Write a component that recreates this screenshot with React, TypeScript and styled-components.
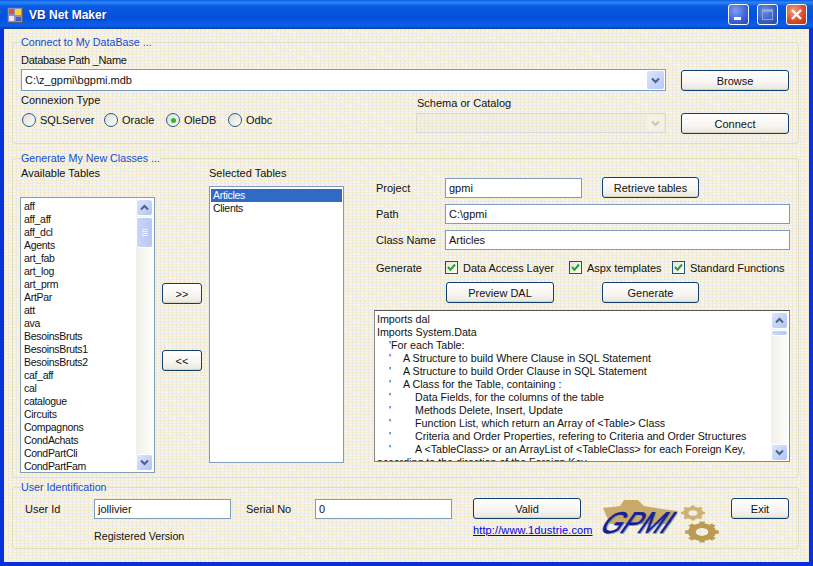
import React from 'react';
import styled, { createGlobalStyle } from 'styled-components';

const GlobalStyle = createGlobalStyle`
  html, body {
    margin: 0;
    padding: 0;
    background: #fff;
  }
  * {
    box-sizing: border-box;
  }
`;

const Window = styled.div`
  width: 813px;
  height: 566px;
  display: flex;
  flex-direction: column;
  overflow: hidden;
  background: #0831d9;
  font-family: "Liberation Sans", Arial, sans-serif;
  font-size: 11px;
  color: #111;
`;

const TitleBar = styled.div`
  height: 29px;
  flex: none;
  display: flex;
  align-items: center;
  padding: 0 6px 0 7px;
  gap: 6px;
  background: linear-gradient(180deg, #0a5ae8 0%, #2a86f5 8%, #0a5ae0 22%, #0350dc 60%, #0a5fe8 88%, #0340b8 100%);
`;

const TitleText = styled.div`
  flex: 1;
  font-size: 12px;
  font-weight: bold;
  color: #fff;
  text-shadow: 1px 1px 0 #0f2f90;
`;

const CaptionButton = styled.div<{ $kind: 'min' | 'max' | 'close' }>`
  width: 21px;
  height: 21px;
  margin-left: 2px;
  border: 1px solid #fff;
  border-radius: 3px;
  display: flex;
  align-items: center;
  justify-content: center;
  background: ${p => p.$kind === 'close'
    ? 'radial-gradient(circle at 35% 30%, #f0a080, #d8482a 60%, #b8300f)'
    : p.$kind === 'max'
      ? 'radial-gradient(circle at 35% 30%, #6c8ee0, #3a5cc0 60%, #2a48a8)'
      : 'radial-gradient(circle at 35% 30%, #7f9ff0, #3a62d8 60%, #2446b8)'};
`;

const Client = styled.div`
  flex: 1;
  margin: 0 4px 4px;
  display: flex;
  flex-direction: column;
  padding: 6px 10px 0 8px;
  background-color: #f5f1e2;
  background-image:
    repeating-linear-gradient(0deg, rgba(250, 232, 150, 0.42) 0 1px, transparent 1px 3px),
    repeating-linear-gradient(90deg, rgba(205, 212, 255, 0.34) 0 1px, transparent 1px 4px),
    repeating-linear-gradient(45deg, rgba(255, 255, 255, 0.45) 0 1px, transparent 1px 3px);
`;

const Group = styled.fieldset<{ $height: number; $top: number }>`
  height: ${p => p.$height}px;
  min-width: 0;
  margin: ${p => p.$top}px 0 0;
  flex: none;
  padding: 0 6px 0 8px;
  border: 1px solid #e2dec2;
  border-radius: 3px;
`;

const Legend = styled.legend`
  padding: 0;
  color: #0f4cd0;
  font-size: 10.7px;
  height: 14px;
  line-height: 14px;
`;

const Label = styled.div<{ $top?: number; $left?: number }>`
  line-height: 14px;
  white-space: nowrap;
  margin-top: ${p => p.$top ?? 0}px;
  margin-left: ${p => p.$left ?? 0}px;
`;

/* connection group */
const ConnectGrid = styled.div`
  display: grid;
  grid-template-columns: 395px 250px 108px;
  margin-top: 4px;
`;

const WideLabel = styled(Label)`
  grid-column: 1 / 4;
  letter-spacing: -0.3px;
`;

const ComboCell = styled.div`
  grid-column: 1 / 3;
  margin-top: 2px;
`;

const Combo = styled.div<{ $disabled?: boolean; $top?: number }>`
  height: ${p => (p.$disabled ? 20 : 22)}px;
  margin-top: ${p => p.$top ?? 0}px;
  display: flex;
  align-items: center;
  justify-content: space-between;
  padding: 0 1px 0 3px;
  border: 1px solid ${p => (p.$disabled ? '#dcdacb' : '#7f9db9')};
  background: ${p => (p.$disabled ? 'rgba(236, 233, 216, 0.35)' : '#fff')};
`;

const ComboArrow = styled.div<{ $disabled?: boolean }>`
  width: 17px;
  height: ${p => (p.$disabled ? 16 : 18)}px;
  display: flex;
  align-items: center;
  justify-content: center;
  border-radius: 2px;
  background: ${p => (p.$disabled ? 'rgba(245, 243, 232, 0.7)' : 'linear-gradient(135deg, #dbe5fd, #b5c8f7)')};
  color: ${p => (p.$disabled ? '#c9c7b8' : '#4d6185')};
`;

const Button = styled.button<{ $width: number; $left?: number }>`
  width: ${p => p.$width}px;
  height: 21px;
  margin-left: ${p => p.$left ?? 0}px;
  flex: none;
  padding: 0;
  border: 1px solid #0f3f6e;
  border-radius: 3px;
  font-family: inherit;
  font-size: 11px;
  color: #111;
  background: linear-gradient(180deg, #fff 0%, #f8f5f2 60%, #e8e6da 100%);
  box-shadow: inset 0 -1px 0 #d8d4c4;
`;

const ButtonCell = styled.div<{ $top?: number }>`
  margin-left: 15px;
  margin-top: ${p => p.$top ?? 0}px;
  justify-self: start;
`;

const ConnexionCell = styled.div`
  margin-top: 2px;
`;

const SchemaCell = styled.div`
  margin-top: 5px;
`;

const RadioRow = styled.div`
  display: flex;
  margin: 6px 0 0 1px;
`;

const RadioItem = styled.label<{ $width: number }>`
  width: ${p => p.$width}px;
  display: flex;
  align-items: center;
  gap: 4px;
`;

const RadioDot = styled.span<{ $checked?: boolean }>`
  width: 14px;
  height: 14px;
  flex: none;
  display: flex;
  align-items: center;
  justify-content: center;
  border: 1px solid #2a5a80;
  border-radius: 50%;
  background: linear-gradient(135deg, #dcdcd4, #fff);

  &::after {
    content: '';
    width: 5px;
    height: 5px;
    border-radius: 50%;
    background: ${p => (p.$checked ? '#32b332' : 'transparent')};
  }
`;

/* generate group */
const GenerateRow = styled.div`
  display: flex;
  margin-left: -1px;
`;

const ListColumn = styled.div`
  width: 135px;
  flex: none;
`;

const ListBox = styled.div<{ $top: number; $height: number }>`
  height: ${p => p.$height}px;
  margin-top: ${p => p.$top}px;
  display: flex;
  padding: 1px;
  border: 1px solid #7f9db9;
  background: #fff;
  overflow: hidden;
`;

const ListItems = styled.div`
  flex: 1;
  min-width: 0;
  overflow: hidden;
  padding-top: 1px;
`;

const ListItem = styled.div<{ $selected?: boolean }>`
  height: 13px;
  line-height: 13px;
  padding-left: 2px;
  font-size: 10.5px;
  letter-spacing: -0.3px;
  white-space: nowrap;
  background: ${p => (p.$selected ? '#316ac5' : 'transparent')};
  color: ${p => (p.$selected ? '#fff' : '#111')};
`;

const TransferColumn = styled.div`
  width: 40px;
  flex: none;
  margin: 118px 7px 0;
  display: flex;
  flex-direction: column;
  gap: 46px;
`;

const FormColumn = styled.div`
  width: 416px;
  flex: none;
  margin-left: 30px;
  display: flex;
  flex-direction: column;
  padding-top: 12px;
`;

const FormRow = styled.div<{ $top?: number }>`
  display: flex;
  align-items: center;
  margin-top: ${p => p.$top ?? 0}px;
`;

const FormLabel = styled.div`
  width: 71px;
  flex: none;
  padding-left: 2px;
`;

const TextBox = styled.div<{ $width?: number }>`
  height: 20px;
  width: ${p => (p.$width ? `${p.$width}px` : 'auto')};
  flex: ${p => (p.$width ? 'none' : 1)};
  display: flex;
  align-items: center;
  padding: 0 3px;
  border: 1px solid #7f9db9;
  background: #fff;
`;

const CheckItem = styled.label<{ $width: number }>`
  width: ${p => p.$width}px;
  flex: none;
  display: flex;
  align-items: center;
  gap: 5px;
  white-space: nowrap;
  letter-spacing: -0.05px;
`;

const CheckBox = styled.span`
  width: 13px;
  height: 13px;
  flex: none;
  display: flex;
  align-items: center;
  justify-content: center;
  border: 1px solid #1c5180;
  background: linear-gradient(135deg, #e4e4dc, #fff);
`;

const CodeBox = styled.div`
  height: 152px;
  margin-top: 7px;
  display: flex;
  padding: 1px 1px 0 2px;
  border: 1px solid #8a8a80;
  border-top-color: #55554c;
  background: #fff;
  overflow: hidden;
`;

const CodeText = styled.div`
  flex: 1;
  min-width: 0;
  overflow: hidden;
  padding-top: 1px;
  font-size: 10.7px;
`;

const CodeLine = styled.div<{ $indent?: number }>`
  height: 13px;
  line-height: 13px;
  white-space: nowrap;
  display: flex;
  padding-left: ${p => p.$indent ?? 0}px;
`;

const Tick = styled.span<{ $width: number }>`
  width: ${p => p.$width}px;
  flex: none;
`;

/* scrollbars */
const ScrollTrack = styled.div`
  width: 17px;
  flex: none;
  display: flex;
  flex-direction: column;
  background: linear-gradient(90deg, #f1f0ea, #fdfdfb);
`;

const ScrollArrow = styled.div`
  height: 17px;
  flex: none;
  display: flex;
  align-items: center;
  justify-content: center;
  border: 1px solid #fff;
  border-radius: 3px;
  background: linear-gradient(135deg, #dbe5fd, #b0c4f5);
  color: #4d6185;
`;

const ScrollThumb = styled.div<{ $height: number }>`
  height: ${p => p.$height}px;
  flex: none;
  margin-top: 1px;
  display: flex;
  flex-direction: column;
  align-items: center;
  justify-content: center;
  gap: 1px;
  border: 1px solid #fff;
  border-radius: 3px;
  background: linear-gradient(90deg, #c9d6fa, #b6c8f6);
`;

const Grip = styled.span`
  width: 6px;
  height: 1px;
  background: #edf2ff;
`;

const ScrollSpacer = styled.div`
  flex: 1;
`;

/* user group */
const UserGrid = styled.div`
  display: grid;
  grid-template-columns: 73px 137px 15px 69px 137px 21px 108px 19px 131px 58px;
  grid-template-rows: 22px 26px;
  margin-top: 4px;
`;

const UserLabel = styled.div<{ $column: number; $pad?: number }>`
  grid-column: ${p => p.$column};
  align-self: center;
  padding-left: ${p => p.$pad ?? 0}px;
`;

const UserBox = styled(TextBox)<{ $column: number }>`
  grid-column: ${p => p.$column};
  margin-top: 1px;
`;

const UserCell = styled.div<{ $column: number }>`
  grid-column: ${p => p.$column};
`;

const RegisteredCell = styled.div`
  grid-column: 2 / 5;
  grid-row: 2;
  margin-top: 10px;
  font-size: 10.7px;
`;

const LinkCell = styled.a`
  grid-column: 7 / 9;
  grid-row: 2;
  margin-top: 4px;
  color: #0000e0;
  text-decoration: underline;
  letter-spacing: 0.12px;
  white-space: nowrap;
`;

const LogoWrap = styled.div`
  grid-column: 9;
  grid-row: 1 / 3;
  position: relative;
  width: 125px;
  height: 48px;
`;

const LogoText = styled.span`
  position: absolute;
  left: 4px;
  top: 8px;
  font-size: 30px;
  font-style: italic;
  color: #11209a;
  -webkit-text-stroke: 0.6px #11209a;
  text-shadow: 2px 1px 0 rgba(110, 110, 130, 0.5);
  transform: skewX(-28deg) scaleX(0.88);
  transform-origin: left center;
`;

const Chevron = ({ up }: { up?: boolean }) => (
  <svg width="9" height="7" viewBox="0 0 9 7" fill="none" stroke="currentColor" strokeWidth="2">
    <path d={up ? 'M1 5.5 L4.5 2 L8 5.5' : 'M1 1.5 L4.5 5 L8 1.5'} />
  </svg>
);

const CheckMark = () => (
  <svg width="9" height="9" viewBox="0 0 9 9" fill="none" stroke="#21a121" strokeWidth="2">
    <path d="M1 4 L3.5 6.8 L8 1.5" />
  </svg>
);

const AppIcon = () => (
  <svg width="16" height="16" viewBox="0 0 16 16">
    <rect x="0.5" y="0.5" width="15" height="15" fill="#8a90b8" stroke="#5a5a80" />
    <rect x="2" y="2" width="5" height="5" fill="#e05a20" />
    <rect x="8" y="2" width="6" height="6" fill="#f8d040" />
    <rect x="2" y="9" width="5" height="5" fill="#e8e8f0" />
    <rect x="9" y="10" width="5" height="4" fill="#4060c0" />
  </svg>
);

// gears in the logo lie flat, so each one is squashed vertically
const Gear = ({ cx, cy, r, fill }: { cx: number; cy: number; r: number; fill: string }) => {
  const teeth = Array.from({ length: 8 }, (_, i) => i * 45);
  return (
    <g fill={fill} transform={`translate(${cx} ${cy}) scale(1 0.62)`}>
      {teeth.map(a => (
        <rect
          key={a}
          x={-r * 0.2}
          y={-r * 1.2}
          width={r * 0.4}
          height={r * 0.4}
          transform={`rotate(${a})`}
        />
      ))}
      <path
        fillRule="evenodd"
        d={`M${-r} 0a${r} ${r} 0 1 0 ${2 * r} 0a${r} ${r} 0 1 0 ${-2 * r} 0Z
            M${-r * 0.45} 0a${r * 0.45} ${r * 0.45} 0 1 1 ${r * 0.9} 0a${r * 0.45} ${r * 0.45} 0 1 1 ${-r * 0.9} 0Z`}
      />
    </g>
  );
};

const LogoGears = () => (
  <svg width="125" height="48" viewBox="0 0 125 48">
    <path d="M3 10 L20 8 L24 2 L38 2 L44 8 L62 11 L78 13 L70 26 L48 26 L10 26 Z" fill="#c8ab68" />
    <Gear cx={93} cy={15} r={10} fill="#cdb275" />
    <Gear cx={102} cy={34} r={14} fill="#bb9a55" />
  </svg>
);

const ScrollBar = ({ thumb }: { thumb: number }) => (
  <ScrollTrack>
    <ScrollArrow>
      <Chevron up />
    </ScrollArrow>
    <ScrollThumb $height={thumb}>
      {thumb > 12 && (
        <>
          <Grip />
          <Grip />
          <Grip />
          <Grip />
        </>
      )}
    </ScrollThumb>
    <ScrollSpacer />
    <ScrollArrow>
      <Chevron />
    </ScrollArrow>
  </ScrollTrack>
);

const tables = [
  'aff', 'aff_aff', 'aff_dcl', 'Agents', 'art_fab', 'art_log', 'art_prm', 'ArtPar', 'att', 'ava',
  'BesoinsBruts', 'BesoinsBruts1', 'BesoinsBruts2', 'caf_aff', 'cal', 'catalogue', 'Circuits',
  'Compagnons', 'CondAchats', 'CondPartCli', 'CondPartFam',
];

const code: [number, string][] = [
  [1, 'A Structure to build Where Clause in SQL Statement'],
  [1, 'A Structure to build Order Clause in SQL Statement'],
  [1, 'A Class for the Table, containing :'],
  [2, 'Data Fields, for the columns of the table'],
  [2, 'Methods Delete, Insert, Update'],
  [2, 'Function List, which return an Array of <Table> Class'],
  [2, 'Criteria and Order Properties, refering to Criteria and Order Structures'],
  [2, 'A <TableClass> or an ArrayList of <TableClass> for each Foreign Key,'],
];

export default function App() {
  return (
    <Window>
      <GlobalStyle />
      <TitleBar>
        <AppIcon />
        <TitleText>VB Net Maker</TitleText>
        <CaptionButton $kind="min">
          <svg width="11" height="11" viewBox="0 0 11 11"><rect x="1" y="8" width="7" height="3" fill="#fff" /></svg>
        </CaptionButton>
        <CaptionButton $kind="max">
          <svg width="13" height="13" viewBox="0 0 13 13" fill="none" stroke="#8fa4dc">
            <rect x="1.5" y="1.5" width="10" height="10" />
            <path d="M1 3h11" strokeWidth="2" />
          </svg>
        </CaptionButton>
        <CaptionButton $kind="close">
          <svg width="13" height="13" viewBox="0 0 13 13" stroke="#fff" strokeWidth="2.4">
            <path d="M2 2 L11 11 M11 2 L2 11" />
          </svg>
        </CaptionButton>
      </TitleBar>
      <Client>
        <Group $height={109} $top={0}>
          <Legend>Connect to My DataBase ...</Legend>
          <ConnectGrid>
            <WideLabel>Database Path _Name</WideLabel>
            <ComboCell>
              <Combo>
                C:\z_gpmi\bgpmi.mdb
                <ComboArrow><Chevron /></ComboArrow>
              </Combo>
            </ComboCell>
            <ButtonCell $top={3}><Button $width={108}>Browse</Button></ButtonCell>
            <ConnexionCell>
              <Label>Connexion Type</Label>
              <RadioRow>
                <RadioItem $width={82}><RadioDot />SQLServer</RadioItem>
                <RadioItem $width={62}><RadioDot />Oracle</RadioItem>
                <RadioItem $width={62}><RadioDot $checked />OleDB</RadioItem>
                <RadioItem $width={60}><RadioDot />Odbc</RadioItem>
              </RadioRow>
            </ConnexionCell>
            <SchemaCell>
              <Label $left={1}>Schema or Catalog</Label>
              <Combo $disabled $top={3}>
                <span />
                <ComboArrow $disabled><Chevron /></ComboArrow>
              </Combo>
            </SchemaCell>
            <ButtonCell $top={22}><Button $width={108}>Connect</Button></ButtonCell>
          </ConnectGrid>
        </Group>

        <Group $height={327} $top={7}>
          <Legend>Generate My New Classes ...</Legend>
          <GenerateRow>
            <ListColumn>
              <Label $top={1} $left={1}>Available Tables</Label>
              <ListBox $top={17} $height={276}>
                <ListItems>
                  {tables.map(t => <ListItem key={t}>{t}</ListItem>)}
                </ListItems>
                <ScrollBar thumb={31} />
              </ListBox>
            </ListColumn>
            <TransferColumn>
              <Button $width={40}>&gt;&gt;</Button>
              <Button $width={40}>&lt;&lt;</Button>
            </TransferColumn>
            <ListColumn>
              <Label $top={1}>Selected Tables</Label>
              <ListBox $top={6} $height={277}>
                <ListItems>
                  <ListItem $selected>Articles</ListItem>
                  <ListItem>Clients</ListItem>
                </ListItems>
              </ListBox>
            </ListColumn>
            <FormColumn>
              <FormRow>
                <FormLabel>Project</FormLabel>
                <TextBox $width={137}>gpmi</TextBox>
                <Button $width={97} $left={20}>Retrieve tables</Button>
              </FormRow>
              <FormRow $top={6}>
                <FormLabel>Path</FormLabel>
                <TextBox>C:\gpmi</TextBox>
              </FormRow>
              <FormRow $top={6}>
                <FormLabel>Class Name</FormLabel>
                <TextBox>Articles</TextBox>
              </FormRow>
              <FormRow $top={11}>
                <FormLabel>Generate</FormLabel>
                <CheckItem $width={124}><CheckBox><CheckMark /></CheckBox>Data Access Layer</CheckItem>
                <CheckItem $width={103}><CheckBox><CheckMark /></CheckBox>Aspx templates</CheckItem>
                <CheckItem $width={110}><CheckBox><CheckMark /></CheckBox>Standard Functions</CheckItem>
              </FormRow>
              <FormRow $top={8}>
                <Button $width={108} $left={72}>Preview DAL</Button>
                <Button $width={97} $left={48}>Generate</Button>
              </FormRow>
              <CodeBox>
                <CodeText>
                  <CodeLine>Imports dal</CodeLine>
                  <CodeLine>Imports System.Data</CodeLine>
                  <CodeLine $indent={12}>'For each Table:</CodeLine>
                  {code.map(([level, text]) => (
                    <CodeLine key={text} $indent={12}>
                      <Tick $width={level === 1 ? 14 : 26}>'</Tick>
                      {text}
                    </CodeLine>
                  ))}
                  <CodeLine>according to the direction of the Foreign Key</CodeLine>
                </CodeText>
                <ScrollBar thumb={6} />
              </CodeBox>
            </FormColumn>
          </GenerateRow>
        </Group>

        <Group $height={69} $top={2}>
          <Legend>User Identification</Legend>
          <UserGrid>
            <UserLabel $column={1} $pad={4}>User Id</UserLabel>
            <UserBox $column={2} $width={137}>jollivier</UserBox>
            <UserLabel $column={4}>Serial No</UserLabel>
            <UserBox $column={5} $width={137}>0</UserBox>
            <UserCell $column={7}><Button $width={108}>Valid</Button></UserCell>
            <LogoWrap>
              <LogoGears />
              <LogoText>GPMI</LogoText>
            </LogoWrap>
            <UserCell $column={10}><Button $width={58}>Exit</Button></UserCell>
            <RegisteredCell>Registered Version</RegisteredCell>
            <LinkCell href="#">http://www.1dustrie.com</LinkCell>
          </UserGrid>
        </Group>
      </Client>
    </Window>
  );
}
